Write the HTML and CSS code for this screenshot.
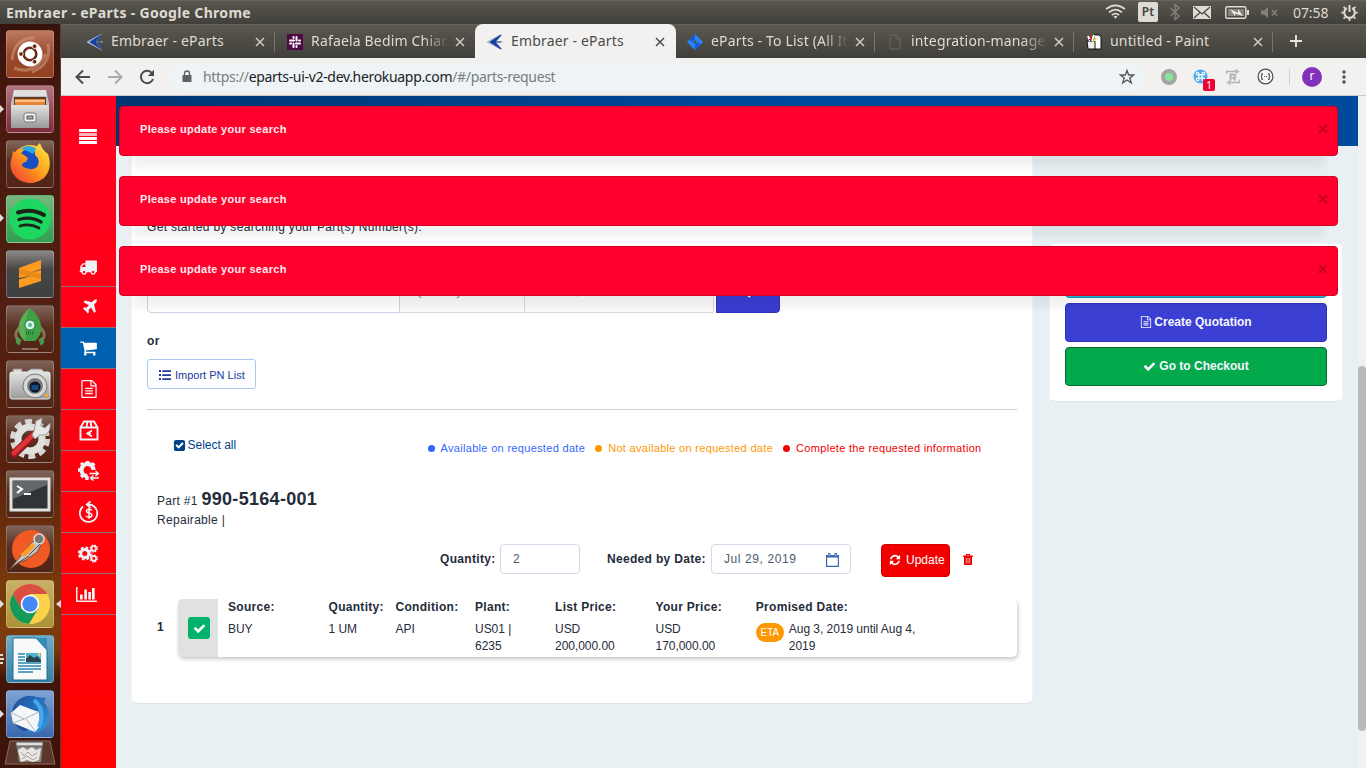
FILE: index.html
```html
<!DOCTYPE html>
<html lang="en">
<head>
<meta charset="utf-8">
<title>Embraer - eParts</title>
<link rel="stylesheet" href="styles.css">
</head>
<body>
<svg class="defs" aria-hidden="true">
  <defs>
    <linearGradient id="silver" x1="0" y1="0" x2="0" y2="1"><stop offset="0" stop-color="#e2e2e0"/><stop offset="1" stop-color="#9a9a98"/></linearGradient>
    <linearGradient id="ff" x1="1" y1="0" x2="0" y2="1"><stop offset="0" stop-color="#fff14a"/><stop offset=".5" stop-color="#ff9a1c"/><stop offset="1" stop-color="#f0303c"/></linearGradient>
    <linearGradient id="bird" x1="0" y1="0" x2="1" y2="1"><stop offset="0" stop-color="#1f4f9f"/><stop offset="1" stop-color="#2f9be0"/></linearGradient>
    <symbol id="embraer" viewBox="0 0 16 16"><path class="halo" d="M0 7.600 13 .6H15.200L9.300 7.200H15.600V8.600H9.300L15.200 15.400H13L0 8.400Z"/><path d="M3 7.500 13.300 1H14.800L8.800 7.500H14V8.500H8.800L14.800 15H13.300L3 8.500Z" fill="#173f9f"/></symbol>
    <symbol id="close" viewBox="0 0 10 10"><path d="M1 1 9 9M9 1 1 9" stroke="currentColor" stroke-width="1.5" fill="none"/></symbol>
    <symbol id="doc" viewBox="0 0 1792 1792"><path fill="currentColor" d="M1596 380q28 28 48 76t20 88v1152q0 40-28 68t-68 28h-1344q-40 0-68-28t-28-68v-1600q0-40 28-68t68-28h896q40 0 88 20t76 48zm-444-244v376h376q-10-29-22-41l-313-313q-12-12-41-22zm384 1528v-1024h-416q-40 0-68-28t-28-68v-416h-768v1536h1280zm-1024-864q0-14 9-23t23-9h704q14 0 23 9t9 23v64q0 14-9 23t-23 9h-704q-14 0-23-9t-9-23v-64zm736 224q14 0 23 9t9 23v64q0 14-9 23t-23 9h-704q-14 0-23-9t-9-23v-64q0-14 9-23t23-9h704zm0 256q14 0 23 9t9 23v64q0 14-9 23t-23 9h-704q-14 0-23-9t-9-23v-64q0-14 9-23t23-9h704z"/></symbol>
    <symbol id="check" viewBox="0 0 1792 1792"><path fill="currentColor" d="M1671 566q0 40-28 68l-724 724-136 136q-28 28-68 28t-68-28l-136-136-362-362q-28-28-28-68t28-68l136-136q28-28 68-28t68 28l294 295 656-657q28-28 68-28t68 28l136 136q28 28 28 68z"/></symbol>
  </defs>
</svg>

<header class="panel">
  <span class="panel-title">Embraer - eParts - Google Chrome</span>
  <div class="tray">
    <svg width="21" height="16" viewBox="0 0 21 16" fill="none" stroke="#dfdbd2" stroke-width="1.7"><path d="M1 5.2Q10.5-2.6 20 5.2M4 8.3Q10.5 2.8 17 8.3M6.8 11.2Q10.5 8 14.2 11.2"/><path d="M8.6 12.6Q10.5 11 12.4 12.6L10.5 14.8Z" fill="#dfdbd2" stroke="none"/></svg>
    <span class="lang">Pt</span>
    <svg width="12" height="18" viewBox="0 0 12 18" fill="none" stroke="#85827a" stroke-width="1.4"><path d="M1.5 5 10 13 6 16.5V1.5L10 5 1.5 13"/></svg>
    <svg width="18" height="13" viewBox="0 0 18 13"><path d="M0 0H18V13H0Z" fill="#dfdbd2"/><path d="M1 1 9 8 17 1M1 12 7 6.500M17 12 11 6.500" stroke="#4a4943" stroke-width="1.3" fill="none"/></svg>
    <svg width="24" height="13" viewBox="0 0 24 13"><rect x=".8" y=".8" width="20" height="11.400" rx="1.500" fill="none" stroke="#dfdbd2" stroke-width="1.500"/><path d="M22 4h2v5h-2z" fill="#dfdbd2"/><path d="M3 3H19V10H3Z" fill="#85827a"/><path d="M5 3 13 7V3L18 10 10 7.500V10Z" fill="#f0eee8"/></svg>
    <svg width="18" height="13" viewBox="0 0 18 13"><path d="M0 4.500H3L7 1V12L3 8.500H0Z" fill="#85827a"/><path d="M11 4 16 9.500M16 4 11 9.500" stroke="#85827a" stroke-width="1.700"/></svg>
    <span class="clock">07:58</span>
    <svg width="17" height="17" viewBox="0 0 17 17" fill="none" stroke="#dfdbd2"><path d="M5.800 4A5.300 5.300 0 1 0 11.200 4" stroke-width="2.100"/><path d="M8.500 1V8" stroke-width="2"/><path d="M2.600 2.800 4 4.200M14.400 2.800 13 4.200M.3 8.700H2.500M14.500 8.700H16.700M2.600 14.700 4 13.200M14.400 14.700 13 13.200M8.500 14.500V17" stroke-width="1.800"/></svg>
  </div>
</header>

<div class="desktop">
  <nav class="launcher">
    <div class="tile ubuntu"><svg viewBox="0 0 48 48"><path d="M6 30Q8 8 28 8M42 14Q46 34 26 42M8 38Q28 46 40 24" fill="none" stroke="#d09a80" stroke-width="3" opacity=".55"/><circle cx="24" cy="24" r="12.500" fill="#fff"/><circle cx="24" cy="24" r="6.300" fill="none" stroke="#6b2a18" stroke-width="2.600"/><g fill="#6b2a18" stroke="#fff" stroke-width=".8"><circle cx="15" cy="24" r="2.300"/><circle cx="28.600" cy="16.300" r="2.300"/><circle cx="28.600" cy="31.700" r="2.300"/></g></svg></div>
    <div class="tile files"><svg viewBox="0 0 48 48"><path d="M8 5H40L43 18V43H5V18Z" fill="#c0c0be"/><path d="M8 5H40L41 11H7Z" fill="#e0e0de"/><path d="M8 12H40V22H8Z" fill="#5e3a24"/><path d="M9 14H39V21H9Z" fill="#e98436"/><path d="M9 16H39" stroke="#ffd49b" stroke-width="1.500"/><path d="M5 20H43V43H5Z" fill="url(#silver)"/><rect x="18" y="28" width="12" height="9" rx="2" fill="#f4f4f2" stroke="#777" /><rect x="21" y="31" width="6" height="3" fill="#aaa" stroke="#555"/></svg></div>
    <div class="tile dark"><svg viewBox="0 0 48 48"><circle cx="24" cy="24" r="19" fill="url(#ff)"/><circle cx="25" cy="20" r="12" fill="#174fc4"/><path d="M15 9Q22 3 31 9L27 14Q20 10 15 9Z" fill="#28a8e8"/><path d="M7 11Q11 14 15 13L22 18 20 22Q16 22 16 26 24 32 31 27 35 20 29 15 28 7 34 3 36 10 42 14 47 28 38 38 25 47 12 39 1 30 6 17Z" fill="url(#ff)"/></svg></div>
    <div class="tile spotify"><svg viewBox="0 0 48 48"><circle cx="24" cy="24" r="20.500" fill="#1ed760"/><g fill="none" stroke="#17251b" stroke-linecap="round"><path d="M12 17.500Q26 13 38 20" stroke-width="4"/><path d="M13 24.500Q25 21 35 27" stroke-width="3.300"/><path d="M14 31Q24 28 33 33" stroke-width="2.700"/></g></svg></div>
    <div class="tile sublime"><svg viewBox="0 0 48 48"><path d="M13 18 35 10V19L22 23.500 35 20V31L13 38V29.500L26 25.500 13 28Z" fill="#ff9c20"/><path d="M13 19 35 24V29L13 24Z" fill="#e88a18"/></svg></div>
    <div class="tile dark"><svg viewBox="0 0 48 48"><path d="M14 22Q5 32 15 36M34 22Q43 32 33 36" fill="none" stroke="#85745b" stroke-width="3"/><path d="M13 33Q9 37 14 39M35 33Q39 37 34 39" fill="none" stroke="#43a047" stroke-width="3"/><path d="M24 3Q37 14 35 27 33 33 29 36H19Q15 33 13 27 11 14 24 3Z" fill="#3fa045"/><path d="M24 3Q17 16 20 36H19Q15 33 13 27 11 14 24 3Z" fill="#5cae59"/><circle cx="24" cy="20" r="5" fill="#d5f4e1" stroke="#267748"/><circle cx="24" cy="20" r="2" fill="#50b6a0"/><path d="M20 28H28" stroke="#236f2b" stroke-width="3" stroke-dasharray="1 1"/><path d="M16 44H32" stroke="#8a7167" stroke-width="2"/></svg></div>
    <div class="tile dark"><svg viewBox="0 0 48 48"><rect x="4" y="12" width="40" height="27" rx="2" fill="url(#silver)" stroke="#eee"/><path d="M7 12V9H16V12M20 12 25 9H35L39 12" fill="#ddd" stroke="#888"/><circle cx="29" cy="26" r="12" fill="#d4d4d4" stroke="#777"/><circle cx="29" cy="26" r="8.500" fill="#777" stroke="#eee"/><circle cx="29" cy="27" r="5.500" fill="#0b1526"/><rect x="25.500" y="25" width="7" height="5" fill="#164c83"/><path d="M39 34h3v3h-3z" fill="#f3a128"/></svg></div>
    <div class="tile dark"><svg viewBox="0 0 48 48"><circle cx="24" cy="24" r="17.500" fill="none" stroke="#d5d5d3" stroke-width="5" stroke-dasharray="7 4"/><circle cx="24" cy="24" r="12" fill="none" stroke="#e0e0de" stroke-width="7"/><path d="M8 39 29 19" stroke="#8e171b" stroke-width="8" stroke-linecap="round"/><path d="M8 38 29 18" stroke="#dc3336" stroke-width="5" stroke-linecap="round"/><path d="M28 16 30 6 36 3 35 11 39 13 44 8Q45 17 39 20L34 20 29 24 26 20Z" fill="#e7e7e5" stroke="#999"/></svg></div>
    <div class="tile dark"><svg viewBox="0 0 48 48"><rect x="5" y="9" width="38" height="31" fill="#303437" stroke="#e2e2df" stroke-width="3"/><path d="M7 11H41V15L7 29Z" fill="#65686a"/><path d="M11 16 16 19 11 23M18 24H25" stroke="#fff" stroke-width="2" fill="none"/></svg></div>
    <div class="tile dark"><svg viewBox="0 0 48 48"><circle cx="25" cy="24" r="19" fill="#f15a24"/><path d="M4 44 13 33 25 18 33 13 36 18 31 27 20 35 12 38Z" fill="#c7c3ba" stroke="#6c5149"/><path d="M14 30 26 18 29 21 20 31Z" fill="#ff9c27"/><circle cx="33" cy="14" r="5" fill="#777" stroke="#ddd" stroke-width="1.500"/><path d="M23 30 34 19M12 38 23 31" stroke="#54443e"/></svg></div>
    <div class="tile chrome"><svg viewBox="0 0 48 48"><circle cx="24" cy="24" r="20" fill="#fbd24a"/><path d="M6.700 14A20 20 0 0 1 41.300 14H24L15 29Z" fill="#d95042"/><path d="M6.700 14A20 20 0 0 0 23 44L32.500 28 15.500 29Z" fill="#149b5a"/><circle cx="24" cy="24" r="9.300" fill="#fff"/><circle cx="24" cy="24" r="7.700" fill="#4688f4"/></svg></div>
    <div class="tile writer"><svg viewBox="0 0 48 48"><path d="M7 3H30L41 15V45H7Z" fill="#f8fafa" stroke="#1d6d90"/><path d="M30 3 41 15V3Z" fill="#338db5"/><path d="M12 19H19M12 22H19M12 25H19M12 28H35M12 31H35M12 34H35M12 37H27" stroke="#2e85b0" stroke-width="1.500"/><path d="M20 18H35V27H20Z" fill="#50b4d7"/><path d="M20 27V24L24 20 28 23 31 21 35 25V27Z" fill="#29444b"/><circle cx="33" cy="19.500" r="1.300" fill="#ffd54f"/></svg></div>
    <div class="tile mail"><svg viewBox="0 0 48 48"><circle cx="24" cy="24" r="18" fill="#244e9c"/><path d="M9 18Q17 2 29 7L40 8Q35 14 43 20 46 35 32 42L18 42Q37 32 30 20L22 17Z" fill="url(#bird)"/><path d="M5 23 14 15 33 22 34 36 29 42 7 33Z" fill="#f4f5f7"/><path d="M6 23 18 29 33 22M18 29 7 33M20 29 29 41" stroke="#aab2bd" fill="none"/><path d="M28 10Q40 20 33 37" stroke="#48a8ee" stroke-width="4" fill="none"/></svg></div>
    <svg class="trash-tile" viewBox="0 0 52 25"><path d="M6 1H46L51 24H1Z" fill="#59372b" stroke="#8c6c60"/><path d="M12 2H39L37 22H15Z" fill="#8c8580"/><path d="M12 2H39V6H12Z" fill="#ddd" stroke="#555"/><path d="M14 10 19 7 23 10 28 7 32 10 37 8 35 20 29 22 23 20 17 22Z" fill="#e7e6e3"/><path d="M17 12 20 16 24 12 28 16 33 13M18 19 23 16 29 20 33 17" stroke="#a9a6a2" fill="none"/></svg>
    <svg class="pips" viewBox="0 0 61 744" fill="#ddd"><path d="M0 81 4 85 0 89ZM0 190 4 194 0 198ZM0 576 4 580 0 584ZM0 686 4 690 0 694ZM61 576 56 580 61 584Z"/><path d="M0 630h3v2H0zM0 634h4v2H0zM0 638h3v2H0z"/></svg>
  </nav>

  <section class="browser">
    <div class="tabs">
      <div class="tab"><svg class="fav"><use href="#embraer"/></svg><span>Embraer - eParts</span><svg class="x"><use href="#close"/></svg></div>
      <div class="tab"><svg class="fav" viewBox="0 0 16 16"><path fill="#4e0a45" d="M0 0H16V16H0Z"/><path stroke="#fff" stroke-width="2" stroke-linecap="round" d="M3 6.500H7M6.500 3V4M9.500 3V6.500M12 6.500H13M9 9.500H13M9.500 12V13M6.500 9.500V13M3 9.500H4"/></svg><span class="fade">Rafaela Bedim Chiar</span><svg class="x"><use href="#close"/></svg></div>
      <div class="tab active"><svg class="fav"><use href="#embraer"/></svg><span>Embraer - eParts</span><svg class="x"><use href="#close"/></svg></div>
      <div class="tab"><svg class="fav" viewBox="0 0 16 16"><path fill="#2684ff" d="M8 0 16 8 8 16 0 8Z"/><path fill="#1559d4" d="M8 0V5L5 8 2.500 5.500ZM8 16V11L11 8 13.500 10.500Z"/><path fill="#4d4c45" d="M8 6 10 8 8 10 6 8Z"/></svg><span class="fade">eParts - To List (All It</span><svg class="x"><use href="#close"/></svg></div>
      <div class="tab"><svg class="fav" viewBox="0 0 16 16"><path d="M3 1H9.500L13 4.500V15H3ZM9 1V5H13" fill="none" stroke="#6b6962"/></svg><span class="fade">integration-manage</span><svg class="x"><use href="#close"/></svg></div>
      <div class="tab"><svg class="fav" viewBox="0 0 16 16"><path d="M8 1H13L15 3V15H8Z" fill="#fff" stroke="#111"/><path d="M1 7H9V15H2Z" fill="#eee" stroke="#111"/><path d="M2 2 4 7M8 1 6 7" stroke="#fff" stroke-width="2"/><path d="M5 1V6" stroke="#d22" stroke-width="1.500"/><path d="M10 4 7 8" stroke="#ec3" stroke-width="1.500"/><path d="M3 5 6 8" stroke="#22c" /></svg><span>untitled - Paint</span><svg class="x"><use href="#close"/></svg></div>
      <svg class="plus" viewBox="0 0 12 12"><path d="M6 0V12M0 6H12" stroke="#e6e3dc" stroke-width="1.900"/></svg>
    </div>
    <div class="toolbar">
      <svg class="nav-ico" viewBox="0 0 16 16"><path d="M15 8H2M8 1.500 1.500 8 8 14.500" fill="none" stroke="#4c4c4c" stroke-width="2"/></svg>
      <svg class="nav-ico" viewBox="0 0 16 16"><path d="M1 8H14M8 1.500 14.500 8 8 14.500" fill="none" stroke="#aaa9a8" stroke-width="2"/></svg>
      <svg class="nav-ico" viewBox="0 0 16 16"><path d="M13.300 4.500A6.200 6.200 0 1 0 14 10" fill="none" stroke="#4c4c4c" stroke-width="2"/><path d="M15 .8V7H8.800Z" fill="#4c4c4c"/></svg>
      <div class="omnibox">
        <svg class="lock" viewBox="0 0 10 13"><path d="M1 5H9Q9.500 5 9.500 5.500V11.500Q9.500 12 9 12H1Q.5 12 .5 11.500V5.500Q.5 5 1 5Z" fill="#5f6368"/><path d="M2.500 5.500V3.500A2.500 2.500 0 0 1 7.500 3.500V5.500" fill="none" stroke="#5f6368" stroke-width="1.300"/></svg>
        <span class="url"><i>https://</i>eparts-ui-v2-dev.herokuapp.com<i>/#/parts-request</i></span>
        <svg class="star" viewBox="0 0 16 16"><path d="M8 1.600 9.700 6H14.600L10.800 9 12.200 13.800 8 11 3.800 13.800 5.200 9 1.400 6H6.300Z" fill="none" stroke="#55585c" stroke-width="1.400"/></svg>
      </div>
      <div class="exts">
        <svg width="16" height="16" viewBox="0 0 16 16"><circle cx="8" cy="8" r="6" fill="#84e79a" stroke="#a5a5a5" stroke-width="4"/></svg>
        <span class="cmd"><svg width="15" height="15" viewBox="0 0 16 16"><circle cx="8" cy="8" r="7.500" fill="#55abe9"/><path d="M6.300 6.300H9.700V9.700H6.300ZM6.300 6.300H5A1.400 1.400 0 1 1 6.300 5ZM9.700 6.300V5A1.400 1.400 0 1 1 11 6.300ZM9.700 9.700H11A1.400 1.400 0 1 1 9.700 11ZM6.300 9.700V11A1.400 1.400 0 1 1 5 9.700Z" fill="none" stroke="#fff" stroke-width="1.200"/></svg><b>1</b></span>
        <svg width="16" height="16" viewBox="0 0 16 16" fill="none" stroke="#b5b4b3"><path d="M1.500 5V2.500H12M10.500 .5 13.500 2.500 10.500 4.500M14.500 10.500V13.500H4M5.500 11.500 2.500 13.500 5.500 15.500" stroke-width="1.300"/><path d="M5.500 11.500V5.500H8.500Q10.500 5.500 10.500 7.200 10.500 8.800 8.500 8.800H5.500M8.300 8.800 10.500 11.500" stroke-width="1.900"/></svg>
        <svg width="17" height="17" viewBox="0 0 17 17"><circle cx="8.500" cy="8.500" r="7.400" fill="#f5f5f5" stroke="#4d4d4d" stroke-width="1.200"/><path d="M6 5.500Q4.500 5.500 4.800 7.300 4.800 8.500 3.800 8.500 4.800 8.500 4.800 9.700 4.500 11.500 6 11.500M11 5.500Q12.500 5.500 12.200 7.300 12.200 8.500 13.200 8.500 12.200 8.500 12.200 9.700 12.500 11.500 11 11.500M7 8.500H7.900M9.100 8.500H10" fill="none" stroke="#444" stroke-width="1.200"/></svg>
        <i class="rule"></i>
        <span class="avatar">r</span>
        <svg width="4" height="16" viewBox="0 0 4 16" fill="#4c4c4c"><circle cx="2" cy="3" r="1.700"/><circle cx="2" cy="8" r="1.700"/><circle cx="2" cy="13" r="1.700"/></svg>
      </div>
    </div>

    <div class="page">
      <aside class="side">
        <div class="burger"><i></i><i></i><i></i><i></i></div>
        <ul class="menu">
          <li class="truck"><svg width="18" height="18" viewBox="0 0 1792 1792"><path fill="currentColor" d="M640 1408q0-52-38-90t-90-38-90 38-38 90 38 90 90 38 90-38 38-90zm-384-512h384v-256h-158q-13 0-22 9l-195 195q-9 9-9 22v30zm1280 512q0-52-38-90t-90-38-90 38-38 90 38 90 90 38 90-38 38-90zm256-1088v1024q0 15-4 26.500t-13.500 18.500-16.500 11.500-23.500 6-22.500 2-25.500 0-22.500-.5q0 106-75 181t-181 75-181-75-75-181h-384q0 106-75 181t-181 75-181-75-75-181h-64q-3 0-22.500.5t-25.500 0-22.500-2-23.500-6-16.500-11.500-13.500-18.500-4-26.500q0-26 19-45t45-19v-320q0-8-.5-35t0-38 2.500-34.500 6.500-37 14-30.500 22.500-30l198-198q19-19 50.500-32t58.500-13h160v-192q0-26 19-45t45-19h1024q26 0 45 19t19 45z"/></svg></li>
          <li class="plane"><svg width="18" height="18" viewBox="0 0 1792 1792"><path fill="currentColor" d="M1568 160q44 52 12 148t-108 172l-161 161 160 696q5 19-12 33l-128 96q-7 6-19 6-4 0-7-1-15-3-21-16l-279-508-259 259 53 194q5 17-8 31l-96 96q-9 9-23 9h-2q-15-2-24-13l-189-252-252-189q-11-7-13-23-1-13 9-25l96-97q9-9 23-9 6 0 8 1l194 53 259-259-508-279q-14-8-17-24-2-16 9-27l128-128q14-13 30-8l665 159 160-160q76-76 172-108t148 12z"/></svg></li>
          <li class="current"><svg width="19" height="18" viewBox="0 0 1792 1792"><path fill="currentColor" d="M704 1536q0 52-38 90t-90 38-90-38-38-90 38-90 90-38 90 38 38 90zm896 0q0 52-38 90t-90 38-90-38-38-90 38-90 90-38 90 38 38 90zm128-1088v512q0 24-16.500 42.500t-40.500 21.500l-1044 122q13 60 13 70 0 16-24 64h920q26 0 45 19t19 45-19 45-45 19h-1024q-26 0-45-19t-19-45q0-11 8-31.500t16-36 21.500-40 15.500-29.500l-177-823h-204q-26 0-45-19t-19-45 19-45 45-19h256q16 0 28.500 6.500t19.500 15.500 13 24.500 8 26 5.500 29.500 4.500 26h1201q26 0 45 19t19 45z"/></svg></li>
          <li><svg width="18" height="18"><use href="#doc"/></svg></li>
          <li><svg width="20" height="21" viewBox="0 0 20 21" fill="none" stroke="currentColor" stroke-width="1.900"><path d="M1.500 7.500 5 1.500H15L18.500 7.500V19.500H1.500ZM1.500 7.500H18.500M7.500 7.500 8.500 1.500M12.500 7.500 11.500 1.500"/><path d="M13 10.500 8 13.500 13 16.500M8 13.500H12" stroke-width="1.500"/></svg></li>
          <li><svg width="22" height="20" viewBox="0 0 22 20"><path d="M15.500 9A6 6 0 1 0 9.500 15" fill="none" stroke="currentColor" stroke-width="4.200"/><path d="M7.800 0h3.600v3H7.800zM7.300 15h3.400v4H7.300zM0 7.200h3v3.600H0zM2 2.400 4.300.9 7 4 3.800 6ZM14.500 1 17.600 3.300 15 6 12 4ZM2 15 4 12 7 14.500 4.500 17.500Z" fill="currentColor"/><path d="M11.500 12.500H20M17.500 10 20.300 12.500 17.500 15M21 17H13M15.500 14.500 12.600 17 15.500 19.500" fill="none" stroke="currentColor" stroke-width="1.500"/></svg></li>
          <li><svg width="20" height="22" viewBox="0 0 20 22" fill="none" stroke="currentColor" stroke-width="1.800"><path d="M4 5.500A8.700 8.700 0 1 0 9.500 3.500H8M11.500.3 7.800 3.500 11.500 6.800"/><path d="M12.800 9.500Q12 8.300 10 8.300 7.500 8.400 7.500 10.100 7.500 11.500 10 12 12.900 12.500 12.900 14.300 12.700 16 10 16 7.800 16 7 14.800M10 6.700V17.700" stroke-width="1.500"/></svg></li>
          <li class="cogs"><svg width="20" height="19" viewBox="0 0 20 19" fill="none" stroke="currentColor"><circle cx="6.800" cy="9.500" r="4" stroke-width="3"/><circle cx="6.800" cy="9.500" r="6" stroke-width="2" stroke-dasharray="2.700 2.010"/><circle cx="15.800" cy="4.500" r="2.300" stroke-width="1.700"/><circle cx="15.800" cy="4.500" r="3.500" stroke-width="1.300" stroke-dasharray="1.600 1.150"/><circle cx="15.800" cy="14.500" r="2.300" stroke-width="1.700"/><circle cx="15.800" cy="14.500" r="3.500" stroke-width="1.300" stroke-dasharray="1.600 1.150"/></svg></li>
          <li class="chart"><svg width="21" height="17" viewBox="0 0 21 17" fill="currentColor"><path d="M0 1H1.500V14.500H21V16H0ZM4 8.500H6.700V13.500H4ZM8.300 3.500H11V13.500H8.300ZM12.300 6H15V13.500H12.300ZM16 2H18.700V13.500H16Z"/></svg></li>
        </ul>
      </aside>

      <main class="content">
        <div class="topbar"></div>
        <div class="columns">
          <section class="card search">
            <p class="intro">Get started by searching your Part(s) Number(s).</p>
            <div class="fields">
              <div class="f1"></div><div class="f2">Quantity</div><div class="f3">Jul 24, 2019</div>
              <div class="find"><svg width="14" height="14" viewBox="0 0 14 14"><circle cx="6" cy="6" r="4.500" fill="none" stroke="#fff" stroke-width="2"/><path d="M9 9 13 13" stroke="#fff" stroke-width="2"/></svg></div>
            </div>
            <p class="or">or</p>
            <button class="import"><svg width="12" height="10" viewBox="0 0 12 10" fill="#203b9e"><path d="M0 0h2v2H0zM0 4h2v2H0zM0 8h2v2H0zM3.300.2H12v1.700H3.300zM3.300 4.200H12v1.700H3.300zM3.300 8.200H12v1.700H3.300z"/></svg>Import PN List</button>
            <div class="divider"></div>
            <div class="filter">
              <span class="select-all"><svg width="13" height="13" viewBox="0 0 1792 1792"><path fill="currentColor" d="M813 1299l614-614q19-19 19-45t-19-45l-102-102q-19-19-45-19t-45 19l-467 467-211-211q-19-19-45-19t-45 19l-102 102q-19 19-19 45t19 45l358 358q19 19 45 19t45-19zm851-883v960q0 119-84.500 203.500t-203.500 84.500h-960q-119 0-203.500-84.500t-84.500-203.500v-960q0-119 84.500-203.500t203.500-84.500h960q119 0 203.500 84.500t84.500 203.500z"/></svg>Select all</span>
              <div class="legend"><span class="blue">Available on requested date</span><span class="orange">Not available on requested date</span><span class="red">Complete the requested information</span></div>
            </div>
            <div class="part"><p class="pn">Part #1 <b>990-5164-001</b></p><p class="kind">Repairable |</p></div>
            <div class="edit">
              <label class="lq">Quantity:</label><div class="input qty">2</div>
              <label class="ln">Needed by Date:</label>
              <div class="input date">Jul 29, 2019<svg width="13" height="14" viewBox="0 0 13 14"><path d="M.6 2.500H12.400V13.400H.6Z" fill="none" stroke="#3768ad" stroke-width="1.200"/><path d="M0 2H13V4.500H0ZM2 0H4.500V3H2ZM8.500 0H11V3H8.500Z" fill="#3768ad"/><path d="M3.200 1V3M9.800 1V3" stroke="#fff" stroke-width=".7"/></svg></div>
              <button class="update"><svg width="12" height="12" viewBox="0 0 1792 1792"><path fill="#fff" d="M1639 1056q0 5-1 7-64 268-268 434.500t-478 166.500q-146 0-282.500-55t-243.500-157l-129 129q-19 19-45 19t-45-19-19-45v-448q0-26 19-45t45-19h448q26 0 45 19t19 45-19 45l-137 137q71 66 161 102t187 36q134 0 250-65t186-179q11-17 53-117 8-23 30-23h192q13 0 22.500 9.500t9.500 22.500zm25-800v448q0 26-19 45t-45 19h-448q-26 0-45-19t-19-45 19-45l138-138q-148-137-349-137-134 0-250 65t-186 179q-11 17-53 117-8 23-30 23h-199q-13 0-22.500-9.500t-9.500-22.500v-7q65-268 270-434.500t480-166.500q146 0 284 55.500t245 156.500l130-129q19-19 45-19t45 19 19 45z"/></svg>Update</button>
              <svg class="del" width="10" height="11" viewBox="0 0 10 11"><path d="M0 1.500H3V0H7V1.500H10V3H9V11H1V3H0ZM4 1V1.600H6V1Z" fill="#f20000" fill-rule="evenodd"/><path d="M3.300 4V9.500M5 4V9.500M6.700 4V9.500" stroke="#fff" stroke-width=".6"/></svg>
            </div>
            <div class="result-row">
              <b class="idx">1</b>
              <div class="result">
                <div class="pick"><span><svg width="13" height="13"><use href="#check"/></svg></span></div>
                <dl><dt>Source:</dt><dd>BUY</dd></dl>
                <dl><dt>Quantity:</dt><dd>1 UM</dd></dl>
                <dl><dt>Condition:</dt><dd>API</dd></dl>
                <dl><dt>Plant:</dt><dd>US01 |<br>6235</dd></dl>
                <dl><dt>List Price:</dt><dd>USD<br>200,000.00</dd></dl>
                <dl><dt>Your Price:</dt><dd>USD<br>170,000.00</dd></dl>
                <dl><dt>Promised Date:</dt><dd class="promise"><span class="eta">ETA</span><span>Aug 3, 2019 until Aug 4,<br>2019</span></dd></dl>
              </div>
            </div>
          </section>
          <section class="card actions">
            <div class="btn cyan"></div>
            <div class="btn quote"><svg width="12" height="12"><use href="#doc"/></svg>Create Quotation</div>
            <div class="btn checkout"><svg width="13" height="13"><use href="#check"/></svg>Go to Checkout</div>
          </section>
        </div>
        <div class="alerts">
          <div class="alert"><b>Please update your search</b><svg class="ax"><use href="#close"/></svg></div>
          <div class="alert"><b>Please update your search</b><svg class="ax"><use href="#close"/></svg></div>
          <div class="alert"><b>Please update your search</b><svg class="ax"><use href="#close"/></svg></div>
        </div>
      </main>
      <div class="scrollbar"><div class="thumb"></div></div>
    </div>
  </section>
</div>
</body>
</html>
```

FILE: styles.css
```css
* { box-sizing: border-box; }
body { margin: 0; width: 1366px; height: 768px; overflow: hidden; font-family: "Liberation Sans", Arial, sans-serif; font-size: 12px; color: #252c3a; }
p, ul, dl, dd { margin: 0; padding: 0; }
svg { display: block; flex: none; }
.defs { position: absolute; width: 0; height: 0; }
button { font-family: inherit; margin: 0; }

.panel { height: 24px; display: flex; justify-content: space-between; align-items: center; padding: 0 8px 0 6px; background: linear-gradient(#59574e, #403f3a); border-top: 1px solid #66645a; color: #dfdbd2; font-family: "Noto Sans", sans-serif; }
.panel-title { font-weight: 700; font-size: 14px; letter-spacing: .31px; white-space: nowrap; margin-top: -1px; }
.tray { display: flex; align-items: center; margin-top: -1px; }
.lang { width: 20px; height: 20px; margin: 0 11px 0 12px; background: #dfdbd2; border-radius: 2px; color: #45443e; font-size: 12px; font-weight: 600; text-align: center; line-height: 20px; }
.tray svg:nth-of-type(3) { margin: 0 14px 0 12px; }
.tray svg:nth-of-type(5) { margin: 0 14px 0 12px; }
.clock { font-size: 14px; width: 36px; margin-right: 12px; letter-spacing: -.1px; white-space: nowrap; }

.desktop { display: flex; height: 744px; }
.launcher { position: relative; width: 61px; display: flex; flex-direction: column; align-items: flex-start; gap: 7px; padding: 6px 0 0 6px; border-right: 1px solid #5a3c32; background: linear-gradient(#35130d, #4a1a0e 12%, #501e13 35%, #58220f 60%, #74350a 72%, #7c3d0c 80%, #79390c 84%, #421609 88%, #3b1309); }
.tile { width: 48px; height: 48px; flex: none; border-radius: 4px; border: 1px solid rgba(255,255,255,.22); overflow: hidden; }
.tile svg { width: 48px; height: 48px; margin: -1px; }
.dark { background: linear-gradient(#80655b, #59301f 45%, #502315); }
.ubuntu { background: linear-gradient(#bd7a61, #9a4a30 50%, #94401f); }
.files { background: linear-gradient(#b27680, #7c2b3a); }
.spotify { background: linear-gradient(#78b77f, #329d51); }
.sublime { background: linear-gradient(#8a8987, #484746 40%, #3f4042); }
.chrome { background: linear-gradient(#c8b168, #ab9135); }
.writer { background: linear-gradient(#70acc9, #357fa4); }
.mail { background: linear-gradient(#80a2d6, #3868ac); }
.trash-tile { width: 52px; height: 25px; margin: -5px 0 0 -2px; }
.pips { position: absolute; left: 0; top: 0; width: 61px; height: 744px; }

.browser { flex: 1; display: flex; flex-direction: column; min-width: 0; }
.tabs { height: 34px; display: flex; padding-left: 14px; background: linear-gradient(#5a584f, #403f3a); border-top: 1px solid #66645a; font-family: "Noto Sans", sans-serif; font-size: 14px; color: #dfdbd2; }
.tab { width: 200px; display: flex; align-items: center; padding: 0 10px 0 12px; }
.tab:nth-child(5), .tab:nth-child(6) { width: 199px; }
.tab span { flex: 1; margin: -1px 0 0 8px; white-space: nowrap; line-height: 22px; letter-spacing: .17px; }
.tab .fade { -webkit-mask-image: linear-gradient(90deg, #000 78%, transparent 96%); mask-image: linear-gradient(90deg, #000 78%, transparent 96%); }
.fav { width: 16px; height: 16px; }
.halo { fill: #a9b6d2; }
.x { width: 10px; height: 10px; color: #d0cdc5; }
.tab:nth-child(1), .tab:nth-child(4), .tab:nth-child(5), .tab:nth-child(6) { background: linear-gradient(#77756d, #77756d) right 7px / 1px 20px no-repeat; }
.tab.active { background: #f2f1f0; color: #4c4c4c; border-radius: 8px 8px 0 0; margin-top: -1px; padding-top: 1px; width: 201px; margin-right: -1px; padding-right: 11px; }
.active .x { color: #4c4c4c; }
.plus { width: 12px; height: 12px; margin: 10px 0 0 17px; }

.toolbar { height: 38px; display: flex; align-items: center; padding-left: 14px; background: #f2f1f0; border-bottom: 1px solid #c9c9c7; }
.nav-ico { width: 16px; height: 16px; margin-right: 16px; }
.omnibox { width: 976px; height: 28px; border-radius: 14px; margin-left: -2px; background: #eef3f5; display: flex; align-items: center; padding: 0 10px 0 13px; }
.lock { width: 10px; height: 13px; margin-right: 11px; }
.url { flex: 1; font-family: "Noto Sans", sans-serif; font-size: 14px; letter-spacing: -.32px; color: #202124; white-space: nowrap; }
.url i { font-style: normal; color: #777c82; }
.star { width: 16px; height: 16px; }
.exts { display: flex; align-items: center; gap: 16px; margin-left: 16px; }
.cmd { position: relative; margin-right: 1px; }
.cmd b { position: absolute; left: 10px; top: 10px; width: 12px; height: 12px; border-radius: 2px; background: #ee0034; color: #fff; font: 10px/12px "Noto Sans", sans-serif; text-align: center; }
.rule { width: 1px; height: 16px; background: #cfcfce; margin-left: -1px; }
.avatar { width: 20px; height: 20px; margin-left: -4px; border-radius: 50%; background: #8430bd; color: #fff; font: 12px/18px "Noto Sans", sans-serif; text-align: center; }
.exts > svg:last-child { margin-left: 4px; }

.page { flex: 1; display: flex; min-height: 0; }
.side { width: 55px; background: linear-gradient(#ff0022, #ff0016 30%, #ff000a 70%, #ff0000); color: #eef2f6; }
.burger { width: 18px; margin: 33px 0 0 18px; display: grid; gap: 1px; }
.burger i { height: 3px; background: #fff; }
.burger i:nth-child(2) { background: #ffb3bc; }
.menu { list-style: none; margin-top: 103px; }
.menu li { height: 41px; display: flex; align-items: center; justify-content: center; border-bottom: 1px solid #8a7078; }
.menu li:first-child { height: 40px; }
.menu .truck { padding-right: 2px; }
.menu .plane { padding-left: 3px; }
.menu .current { background: #0060b0; color: #fff; }
.menu .cogs { padding-right: 2px; }
.menu .chart { padding-right: 5px; }

.content { position: relative; width: 1242px; background: #e8f0f3; }
.topbar { height: 50px; background: linear-gradient(90deg, #003670, #004a9c 55%); }
.columns { display: flex; align-items: flex-start; gap: 16px; padding-left: 15px; }
.card { background: #fff; border: 1px solid #f0f4f6; border-bottom-color: #dce4e8; }
.search { width: 902px; height: 558px; padding: 72px 15px 0; border-top: 0; border-radius: 0 0 6px 6px; }
.intro { line-height: 18px; letter-spacing: .31px; }
.fields { height: 38px; margin-top: 39px; display: flex; line-height: 31px; letter-spacing: .5px; color: #929292; }
.f1 { width: 253px; border: 1px solid #ccd4e6; border-radius: 0 0 0 4px; }
.f2 { width: 125px; border: 1px solid #d8d8dc; border-left: 0; background: #fafafa; padding-left: 14px; }
.f3 { width: 189px; border: 1px solid #d8d8dc; border-left: 0; background: #fafafa; padding-left: 15px; }
.find { width: 64px; margin-left: 2px; background: #3b3dd3; border: 1px solid #3033b8; border-radius: 0 4px 4px 0; display: flex; align-items: center; justify-content: center; padding: 0 8px 6px 0; }
.or { font-weight: 700; margin-top: 19px; line-height: 18px; letter-spacing: .3px; }
.import { display: flex; align-items: center; gap: 4px; width: 109px; height: 30px; margin-top: 9px; padding: 2px 0 0 11px; border: 1px solid #a9c6f5; border-radius: 3px; background: #fff; color: #203b9e; font-size: 11px; white-space: nowrap; }
.divider { height: 1px; background: #cfd0d2; margin-top: 20px; }
.filter { display: flex; justify-content: space-between; height: 80px; padding: 25px 35.5px 0 26px; }
.select-all { display: flex; align-items: center; height: 20px; gap: 1.5px; color: #00438a; }
.legend { display: flex; align-items: center; height: 20px; margin-top: 3px; gap: 10px; font-size: 11px; letter-spacing: .31px; white-space: nowrap; }
.legend span { display: flex; align-items: center; }
.legend span::before { content: ""; width: 7px; height: 7px; border-radius: 50%; background: currentColor; margin-right: 6px; }
.blue { color: #3366ff; } .orange { color: #ff9800; } .red { color: #f20000; }
.part { height: 55px; padding-left: 10px; letter-spacing: .3px; }
.pn { line-height: 20px; height: 22px; margin-top: -1px; } .pn b { font-size: 18px; }
.kind { line-height: 18px; letter-spacing: .3px; }
.edit { display: flex; height: 55px; padding-left: 293px; align-items: flex-start; }
.edit label { line-height: 30px; font-weight: 700; letter-spacing: .32px; white-space: nowrap; }
.lq { width: 60px; } .ln { width: 104px; margin-left: 27px; }
.input { height: 30px; line-height: 28px; border: 1px solid #d2daea; border-radius: 4px; padding-left: 12px; color: #4b5a73; letter-spacing: .6px; white-space: nowrap; }
.qty { width: 80px; }
.date { width: 140px; display: flex; align-items: center; justify-content: space-between; padding-right: 11px; }
.date svg { margin-top: 2px; }
.update { width: 69px; height: 33px; margin-left: 30px; padding: 0 0 2px 7px; display: flex; align-items: center; gap: 5px; border: 1px solid #d90000; border-radius: 4px; background: #f20000; color: #fff; font-size: 12px; }
.del { margin: 10px 0 0 12.5px; }
.result-row { display: flex; height: 58px; }
.idx { width: 31px; padding-left: 10px; line-height: 57px; }
.result { flex: 1; display: grid; grid-template-columns: 40px 110.500px 67px 79.500px 80px 100.500px 100.300px 1fr; border-radius: 5px; box-shadow: 1px 2px 4px rgba(0,0,0,.23); background: #fff; clip-path: inset(0 -6px -8px -6px); }
.pick { background: #e1e1e1; border-radius: 5px 0 0 5px; display: flex; align-items: center; justify-content: center; padding-left: 2px; }
.pick span { width: 22px; height: 22px; background: #00b36b; color: #fff; border-radius: 3px; display: flex; align-items: center; justify-content: center; }
.result dl:nth-of-type(1) { padding-left: 10px; }
.result dt { font-weight: 700; letter-spacing: .3px; line-height: 17px; white-space: nowrap; }
.result dd { line-height: 17px; margin-top: 5px; letter-spacing: -.04px; white-space: nowrap; }
.promise { display: flex; gap: 5px; }
.eta { width: 28px; height: 19px; margin-top: 2px; background: #ff9800; border-radius: 10px; color: #fff; font-size: 10px; line-height: 19px; text-align: center; }

.actions { width: 294px; height: 159px; margin-top: 97px; padding: 15px; border-radius: 6px; display: flex; flex-direction: column; gap: 5px; }
.btn { height: 39px; border-radius: 4px; display: flex; align-items: center; justify-content: center; gap: 2px; color: #f4f6ff; font-weight: 700; padding-bottom: 1px; }
.cyan { background: #21b9d2; border: 1px solid #1298bd; }
.quote { background: #3b3fd3; border: 1px solid #3033b8; }
.checkout { background: #02aa4b; border: 1px solid #07692f; gap: 3px; }

.alerts { position: absolute; left: 3px; top: 10px; width: 1219px; display: grid; gap: 20px; }
.alert { height: 50px; border: 1px solid #d50028; border-radius: 4px; background: #ff002d; box-shadow: 0 25px 8px -14px rgba(0,0,0,.06); color: #ffe9ed; font-size: 11px; letter-spacing: .29px; display: flex; justify-content: space-between; padding: 16px 9px 0 20px; }
.ax { width: 10px; height: 10px; margin-top: 1px; color: #b10022; }
.scrollbar { width: 8px; background: #f1f1f1; padding-top: 270px; }
.thumb { height: 365px; border-radius: 4px; background: #b9b9b9; }
```
